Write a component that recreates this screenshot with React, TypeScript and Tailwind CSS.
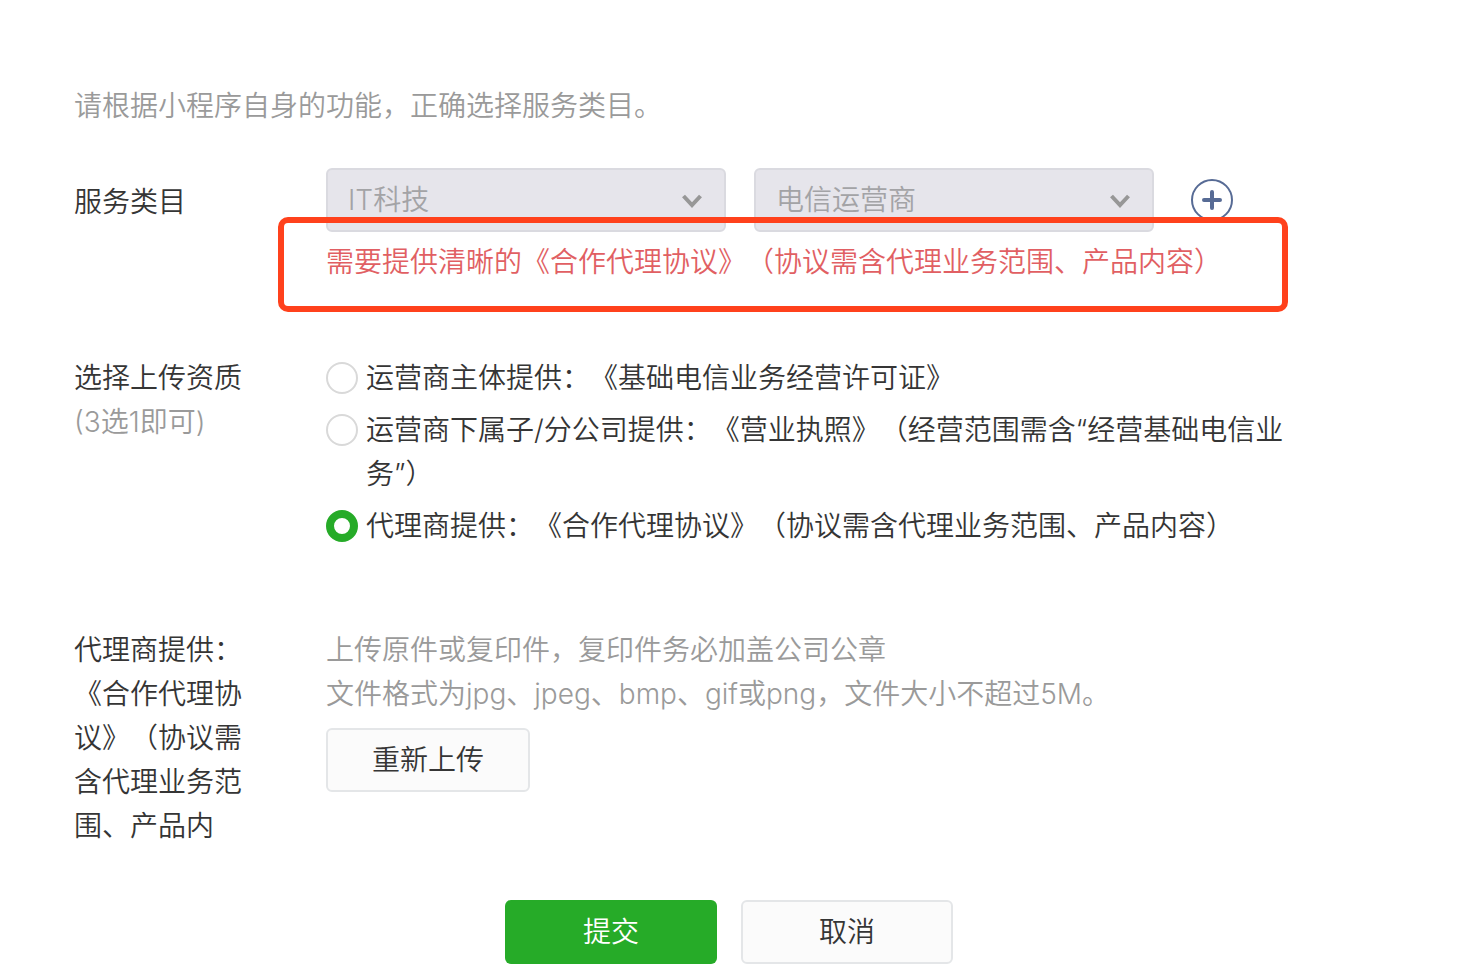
import React, { useState } from 'react';

const qualifications = [
  { id: 'operator', label: '运营商主体提供：《基础电信业务经营许可证》' },
  { id: 'branch', label: '运营商下属子/分公司提供：《营业执照》（经营范围需含“经营基础电信业务”）' },
  { id: 'agent', label: '代理商提供：《合作代理协议》（协议需含代理业务范围、产品内容）' },
];

function CategorySelect({ name, value }: { name: string; value: string }) {
  return (
    <div className="relative w-[400px]">
      <select
        aria-label={name}
        disabled
        defaultValue={value}
        className="block h-16 w-full appearance-none rounded-md border-2 border-[#dadae0] bg-[#e6e5eb] pl-5 pr-16 font-[350] leading-[44px] text-[#a3a3a6] opacity-100"
      >
        <option value={value}>{value}</option>
      </select>
      <svg
        className="pointer-events-none absolute right-[22px] top-[25px] h-4 w-6"
        viewBox="0 0 24 16"
        fill="none"
        stroke="#979797"
        strokeWidth="4"
      >
        <path d="M3.5 3 L12 12 L20.5 3" />
      </svg>
    </div>
  );
}

export default function App() {
  const [selected, setSelected] = useState('agent');

  return (
    <form
      onSubmit={(e) => e.preventDefault()}
      className="bg-white pb-3 pl-[74px] pr-[84px] pt-[84px] font-['Inter','Noto_Sans_CJK_SC',sans-serif] text-[28px] font-[350] leading-[44px] text-[#353535] [text-spacing-trim:space-all]"
    >
      <p className="text-[#9a9a9a]">请根据小程序自身的功能，正确选择服务类目。</p>

      {/* Service category */}
      <section className="mt-10 flex gap-[84px]">
        <div className="w-[168px] shrink-0 pt-3">服务类目</div>
        <div className="relative flex-1">
          <div className="flex items-center">
            <CategorySelect name="一级类目" value="IT科技" />
            <div className="w-7" />
            <CategorySelect name="二级类目" value="电信运营商" />
            <button type="button" aria-label="添加服务类目" className="ml-9 cursor-pointer">
              <svg className="size-11" viewBox="0 0 44 44" fill="none" stroke="#576b95">
                <circle cx="22" cy="22" r="20" strokeWidth="2" />
                <path d="M22 14v16M14 22h16" strokeWidth="4" strokeLinecap="round" />
              </svg>
            </button>
          </div>
          <p className="mt-2 text-[#e15f63]">
            需要提供清晰的《合作代理协议》（协议需含代理业务范围、产品内容）
          </p>
          {/* Highlight frame around the requirement */}
          <div className="pointer-events-none absolute -bottom-7 -left-12 right-24 top-[49px] rounded-[10px] border-[6px] border-[#ff411c]" />
        </div>
      </section>

      {/* Qualification type */}
      <section className="mt-[72px] flex gap-[84px]">
        <div className="w-[168px] shrink-0">
          <div>选择上传资质</div>
          <div className="text-[#9a9a9a]">(3选1即可)</div>
        </div>
        <div role="radiogroup" aria-label="选择上传资质" className="flex flex-1 flex-col gap-2 pr-24">
          {qualifications.map((item) => (
            <label key={item.id} htmlFor={item.id} className="flex cursor-pointer gap-2">
              <input
                id={item.id}
                type="radio"
                name="qualification"
                checked={selected === item.id}
                onChange={() => setSelected(item.id)}
                className="mt-1.5 size-8 shrink-0 appearance-none rounded-full border-2 border-[#d9d9d9] bg-white checked:border-8 checked:border-[#26ab28]"
              />
              <span>{item.label}</span>
            </label>
          ))}
        </div>
      </section>

      {/* File upload */}
      <section className="mt-20 flex gap-[84px]">
        <div className="w-[168px] shrink-0">代理商提供：《合作代理协议》（协议需含代理业务范围、产品内</div>
        <div className="flex-1">
          <p className="text-[#9a9a9a]">上传原件或复印件，复印件务必加盖公司公章</p>
          <p className="text-[#9a9a9a]">文件格式为jpg、jpeg、bmp、gif或png，文件大小不超过5M。</p>
          <button
            type="button"
            className="mt-3 block h-16 w-[204px] cursor-pointer rounded-md border-2 border-[#e4e6e8] bg-[#fbfbfb]"
          >
            重新上传
          </button>
        </div>
      </section>

      <div className="mt-[52px] flex justify-center gap-6">
        <button type="submit" className="h-16 w-[212px] cursor-pointer rounded-md bg-[#26ab28] text-white">
          提交
        </button>
        <button
          type="button"
          className="h-16 w-[212px] cursor-pointer rounded-md border-2 border-[#e4e6e8] bg-[#fbfbfb]"
        >
          取消
        </button>
      </div>
    </form>
  );
}
